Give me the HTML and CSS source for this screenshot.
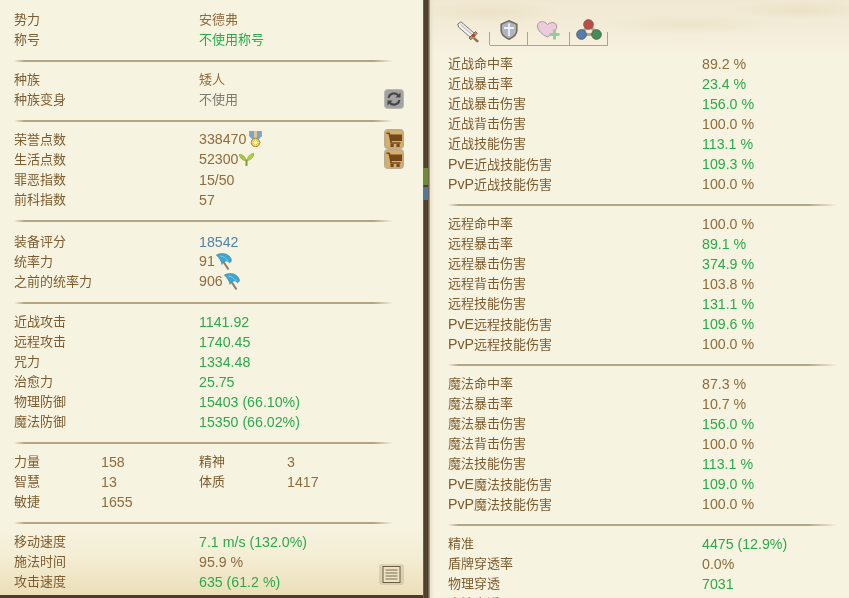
FILE: index.html
```html
<!DOCTYPE html>
<html lang="zh-CN">
<head>
    <meta charset="UTF-8">
    <title>角色信息</title>
    <link rel="stylesheet" href="styles.css">
</head>
<body>
    <svg class="defs" width="0" height="0">
        <symbol id="cart" viewBox="0 0 20 20">
            <rect x="0.5" y="0.5" width="19" height="19" rx="3" fill="#c9ab74" stroke="#b9ad90"/>
            <rect x="2" y="2" width="16" height="16" rx="1.5" fill="#d6ae70"/>
            <path d="M2.500 3.500h3.200l.7 2H18v6.500H7.600l.3 1.300H16.500v1.500H6.500L4.500 5H2.500z" fill="#74491a"/>
            <rect x="6.500" y="15" width="3.200" height="3" fill="#74491a"/>
            <rect x="12.500" y="15" width="3.200" height="3" fill="#74491a"/>
        </symbol>
        <symbol id="flag" viewBox="0 0 16 17">
            <path d="M5 5l7.500 11.500" stroke="#8d7d66" stroke-width="2" fill="none"/>
            <path d="M.3 2C3 .3 8 0 11 1.500c2.500 1.300 4 3.500 4.700 6-.5 1-1.300 1.800-2.200 2.500C13 8.500 11 7 8.500 8.500 7 9 6.500 10.500 6 11.500 5.500 8 3 4.500.3 2z" fill="#3fa6d2" stroke="#3a8aab" stroke-width=".6"/>
            <path d="M4 3c3 0 6 2 8 5" stroke="#86cdea" stroke-width=".9" fill="none"/>
        </symbol>
    </svg>

    <div class="window">
        <div class="panel-left">
            <div class="group">
                <div class="row"><span class="k">势力</span><span class="v zh">安德弗</span></div>
                <div class="row"><span class="k">称号</span><span class="v zh green">不使用称号</span></div>
            </div>
            <div class="line"></div>
            <div class="group">
                <div class="row"><span class="k">种族</span><span class="v zh">矮人</span></div>
                <div class="row">
                    <span class="k">种族变身</span><span class="v zh gray">不使用</span>
                    <span class="btn">
                        <svg width="20" height="20" viewBox="0 0 20 20">
                            <rect x="0.500" y="0.500" width="19" height="19" rx="3" fill="#a3a3a1" stroke="#b8b8b4"/>
                            <path d="M4.500 9a5.700 5.700 0 0 1 10-2.500" stroke="#464646" stroke-width="2" fill="none"/>
                            <path d="M16.500 3.500v5h-5z" fill="#464646"/>
                            <path d="M15.500 11a5.700 5.700 0 0 1-10 2.500" stroke="#464646" stroke-width="2" fill="none"/>
                            <path d="M3.500 16.500v-5h5z" fill="#464646"/>
                        </svg>
                    </span>
                </div>
            </div>
            <div class="line"></div>
            <div class="group">
                <div class="row">
                    <span class="k">荣誉点数</span>
                    <span class="v with-icon">338470
                        <svg width="13" height="16" viewBox="0 0 13 16">
                            <path d="M0 0h13v5L9 9H4L0 5z" fill="#7ba3d4"/>
                            <path d="M5 0h3v8H5z" fill="#d9c98c"/>
                            <path d="M0 0h1.500v5H0zM11.500 0H13v5h-1.500z" fill="#a9a38a"/>
                            <circle cx="6.500" cy="11.500" r="4.300" fill="#e8c84a" stroke="#8f7a3c" stroke-width=".8"/>
                            <path d="M6.500 8.500v6M3.500 11.500h6M4.400 9.400l4.200 4.200M8.600 9.400l-4.200 4.200" stroke="#fff6c4" stroke-width=".8"/>
                        </svg>
                    </span>
                    <span class="btn"><svg width="20" height="20"><use href="#cart"/></svg></span>
                </div>
                <div class="row">
                    <span class="k">生活点数</span>
                    <span class="v with-icon tight">52300
                        <svg width="15" height="13" viewBox="0 0 15 13">
                            <path d="M7.500 6.500V13" stroke="#7f9a2e" stroke-width="2"/>
                            <path d="M7 7.500C4 8 .8 5 0 1.500 3 1 6.500 3 7 7.500z" fill="#a3c83e" stroke="#7f9a2e" stroke-width=".5"/>
                            <path d="M8 7.500C8.500 3 11.500 .5 15 .5 14.500 4.500 11.500 7.500 8 7.500z" fill="#aed046" stroke="#7f9a2e" stroke-width=".5"/>
                        </svg>
                    </span>
                    <span class="btn"><svg width="20" height="20"><use href="#cart"/></svg></span>
                </div>
                <div class="row"><span class="k">罪恶指数</span><span class="v">15/50</span></div>
                <div class="row"><span class="k">前科指数</span><span class="v">57</span></div>
            </div>
            <div class="line line-wide"></div>
            <div class="group">
                <div class="row"><span class="k">装备评分</span><span class="v blue">18542</span></div>
                <div class="row">
                    <span class="k">统率力</span>
                    <span class="v with-icon tight">91<svg width="16" height="17"><use href="#flag"/></svg></span>
                </div>
                <div class="row">
                    <span class="k">之前的统率力</span>
                    <span class="v with-icon tight">906<svg width="16" height="17"><use href="#flag"/></svg></span>
                </div>
            </div>
            <div class="line"></div>
            <div class="group">
                <div class="row"><span class="k">近战攻击</span><span class="v green">1141.92</span></div>
                <div class="row"><span class="k">远程攻击</span><span class="v green">1740.45</span></div>
                <div class="row"><span class="k">咒力</span><span class="v green">1334.48</span></div>
                <div class="row"><span class="k">治愈力</span><span class="v green">25.75</span></div>
                <div class="row"><span class="k">物理防御</span><span class="v green">15403 (66.10%)</span></div>
                <div class="row"><span class="k">魔法防御</span><span class="v green">15350 (66.02%)</span></div>
            </div>
            <div class="line"></div>
            <div class="group attrs">
                <span class="k">力量</span><span class="v">158</span><span class="k">精神</span><span class="v">3</span>
                <span class="k">智慧</span><span class="v">13</span><span class="k">体质</span><span class="v">1417</span>
                <span class="k">敏捷</span><span class="v">1655</span>
            </div>
            <div class="line"></div>
            <div class="group">
                <div class="row"><span class="k">移动速度</span><span class="v green">7.1 m/s (132.0%)</span></div>
                <div class="row"><span class="k">施法时间</span><span class="v">95.9 %</span></div>
                <div class="row"><span class="k">攻击速度</span><span class="v green">635 (61.2 %)</span></div>
            </div>
            <svg class="note" width="25" height="21" viewBox="0 0 25 21">
                <rect x="0" y="0" width="25" height="21" rx="3" fill="#b5a988" opacity=".35"/>
                <rect x="4" y="2.500" width="17" height="16" fill="#ece3c4" stroke="#6a5c42" stroke-width="1"/>
                <path d="M6.500 6h12M6.500 9h12M6.500 12h12M6.500 15h12" stroke="#7a6c50" stroke-width="1"/>
            </svg>
        </div>

        <div class="frame">
            <div class="strip green-strip"></div>
            <div class="strip blue-strip"></div>
        </div>

        <div class="panel-right">
            <div class="tabs">
                <div class="tab tab-on">
                    <svg width="24" height="22" viewBox="0 0 24 22">
                        <path d="M.8 3L4 .8l13.500 11.700-4 4L1.500 6z" fill="#f4f3f0" stroke="#77746a" stroke-width="1"/>
                        <path d="M3.500 3.500l11.500 10" stroke="#c2c2be" stroke-width="1.200"/>
                        <path d="M12 17l6.500-6.500 1.800 1.800-6.500 6.500z" fill="#b09a6a" stroke="#6b5a38" stroke-width=".8"/>
                        <path d="M17.500 16l4.500 4-1.800 1.800-4.400-4z" fill="#8a7550"/>
                        <circle cx="16.500" cy="14.500" r="1.600" fill="#c8323c"/>
                    </svg>
                </div>
                <div class="tab">
                    <svg width="18" height="20" viewBox="0 0 18 20">
                        <path d="M9 .800l7.800 3.500v6.500c0 4-3.600 6.500-7.800 8.400-4.200-1.900-7.800-4.400-7.800-8.400V4.300z" fill="#aab6c4" stroke="#7a6e56" stroke-width="1.600"/>
                        <path d="M9 3.500v12.500M4 8h10" stroke="#eef0f2" stroke-width="1.800"/>
                    </svg>
                </div>
                <div class="tab">
                    <svg width="24" height="19" viewBox="0 0 24 19">
                        <path d="M10.500 16C5 13.500.5 9.500.5 5 .5 1.800 3.500 0 6.500 .8c2 .5 3 1.700 4 2.700C12 2 14.500 1.200 17 1.800c2.500.6 3.200 3.400 2.300 5.700-1 3-4.300 6.200-8.800 8.500z" fill="#ecccdc" stroke="#978688" stroke-width=".8"/>
                        <path d="M17.500 8.500v10M12.500 13.500h10" stroke="#93cc9e" stroke-width="3"/>
                    </svg>
                </div>
                <div class="tab">
                    <svg width="26" height="21" viewBox="0 0 26 21">
                        <path d="M13 5L5 15.500h16z" fill="none" stroke="#b3a58c" stroke-width="3"/>
                        <circle cx="12.500" cy="5.500" r="4.800" fill="#bf4a46" stroke="#75604f"/>
                        <circle cx="5.500" cy="15.500" r="4.800" fill="#4f7fb5" stroke="#5f5f5a"/>
                        <circle cx="20.500" cy="15.500" r="4.800" fill="#3f8f56" stroke="#5f5f4f"/>
                    </svg>
                </div>
            </div>

            <div class="group">
                <div class="row"><span class="k">近战命中率</span><span class="v">89.2 %</span></div>
                <div class="row"><span class="k">近战暴击率</span><span class="v green">23.4 %</span></div>
                <div class="row"><span class="k">近战暴击伤害</span><span class="v green">156.0 %</span></div>
                <div class="row"><span class="k">近战背击伤害</span><span class="v">100.0 %</span></div>
                <div class="row"><span class="k">近战技能伤害</span><span class="v green">113.1 %</span></div>
                <div class="row"><span class="k"><span class="lat">PvE</span>近战技能伤害</span><span class="v green">109.3 %</span></div>
                <div class="row"><span class="k"><span class="lat">PvP</span>近战技能伤害</span><span class="v">100.0 %</span></div>
            </div>
            <div class="line"></div>
            <div class="group">
                <div class="row"><span class="k">远程命中率</span><span class="v">100.0 %</span></div>
                <div class="row"><span class="k">远程暴击率</span><span class="v green">89.1 %</span></div>
                <div class="row"><span class="k">远程暴击伤害</span><span class="v green">374.9 %</span></div>
                <div class="row"><span class="k">远程背击伤害</span><span class="v">103.8 %</span></div>
                <div class="row"><span class="k">远程技能伤害</span><span class="v green">131.1 %</span></div>
                <div class="row"><span class="k"><span class="lat">PvE</span>远程技能伤害</span><span class="v green">109.6 %</span></div>
                <div class="row"><span class="k"><span class="lat">PvP</span>远程技能伤害</span><span class="v">100.0 %</span></div>
            </div>
            <div class="line"></div>
            <div class="group">
                <div class="row"><span class="k">魔法命中率</span><span class="v">87.3 %</span></div>
                <div class="row"><span class="k">魔法暴击率</span><span class="v">10.7 %</span></div>
                <div class="row"><span class="k">魔法暴击伤害</span><span class="v green">156.0 %</span></div>
                <div class="row"><span class="k">魔法背击伤害</span><span class="v">100.0 %</span></div>
                <div class="row"><span class="k">魔法技能伤害</span><span class="v green">113.1 %</span></div>
                <div class="row"><span class="k"><span class="lat">PvE</span>魔法技能伤害</span><span class="v green">109.0 %</span></div>
                <div class="row"><span class="k"><span class="lat">PvP</span>魔法技能伤害</span><span class="v">100.0 %</span></div>
            </div>
            <div class="line"></div>
            <div class="group">
                <div class="row"><span class="k">精准</span><span class="v green">4475 (12.9%)</span></div>
                <div class="row"><span class="k">盾牌穿透率</span><span class="v">0.0%</span></div>
                <div class="row"><span class="k">物理穿透</span><span class="v green">7031</span></div>
                <div class="row"><span class="k">魔法穿透</span></div>
            </div>
        </div>
    </div>
</body>
</html>
```

FILE: styles.css
```css
html,body{margin: 0; padding: 0; height: 100%; overflow: hidden; background: #4a3d2b;}
.defs{display: block; height: 0;}

.window{
    display: flex;
    height: 598px;
    font-family: "Liberation Sans", "Noto Sans CJK SC", sans-serif;
    font-size: 14.2px;
    line-height: 20px;
    color: #8f6c3c;
    /* the reference is a slightly scaled capture, text is soft */
    filter: blur(0.3px);
}

/* left column */
.panel-left{
    position: relative;
    box-sizing: border-box;
    width: 423px;
    height: 595px;
    padding: 9px 0 0 14px;
    overflow: hidden;
    background: linear-gradient(to bottom, #f7f3e1 0, #f7f3e1 525px, #f4eed5 555px, #ecdfb9 595px);
}
.note{position: absolute; left: 379px; top: 564px;}

/* dark bar between the columns */
.frame{
    box-sizing: border-box;
    width: 7px;
    padding-top: 168px;
    background: linear-gradient(to right, #8f8263 0, #4c3f2c 1px, #54462f 4px, #3f3323 5px, #a89a7c 6px);
}
.strip{width: 5px;}
.green-strip{height: 17px; background: #6f8a35;}
.blue-strip{height: 13px; margin-top: 2px; background: #4f7a9e;}

/* right column */
.panel-right{
    flex: 1;
    box-sizing: border-box;
    height: 598px;
    padding-left: 18px;
    overflow: hidden;
    background:
        radial-gradient(ellipse 70px 12px at 60px 12px, rgba(222,208,172,.35), transparent),
        radial-gradient(ellipse 90px 10px at 260px 24px, rgba(226,213,180,.35), transparent),
        radial-gradient(ellipse 70px 10px at 370px 10px, rgba(222,208,172,.35), transparent),
        linear-gradient(to bottom, #f1e9d3 0, #f3ecd8 30px, #f7f3e1 56px);
    box-shadow: inset 3px 0 3px -1px #e8e1cb;
}

.tabs{
    display: flex;
    align-items: flex-end;
    width: 160px;
    height: 46px;
    margin-bottom: 7px;
}
.tab{
    display: flex;
    justify-content: center;
    align-items: flex-end;
    box-sizing: border-box;
    height: 27px;
    padding-bottom: 5px;
    border-bottom: 1px solid #b3a381;
    /* short tick on the right side of each tab */
    background: linear-gradient(#b3a381, #b3a381) right bottom / 1px 13px no-repeat;
}
.tab-on{width: 42px; border-bottom-color: transparent; padding: 0 0 2px 0;}
.tab:nth-child(2){width: 38px;}
.tab:nth-child(3){width: 42px;}
.tab:nth-child(4){width: 38px;}

.row{display: flex; height: 20px;}
.k{display: block; width: 185px; padding-top: 1px; font-size: 13px; color: #7c5c2e;}
.v{padding-top: 1px;}
.panel-right .k{width: 254px;}
.lat{font-size: 14.2px;}
.zh{font-size: 13px;}
.green{color: #2aab4a;}
.gray{color: #7d7a6e;}
.blue{color: #4f84a8;}

.with-icon{display: flex; align-items: center; gap: 3px; padding-top: 0;}
.tight{gap: 1px;}
.btn{display: block; height: 20px; margin-left: auto; margin-right: 19px;}
.btn svg{display: block;}

.line{
    width: 379px;
    height: 2px;
    margin: 11px 0 7px;
    background: linear-gradient(to right, transparent, #b5a583 10px, #b5a583 360px, transparent);
}
.line-wide{margin-bottom: 9px;}
.panel-right .line{width: 390px;}

.attrs{display: grid; grid-template-columns: 87px 98px 88px auto; grid-auto-rows: 20px;}
.attrs .k{width: auto;}
```
